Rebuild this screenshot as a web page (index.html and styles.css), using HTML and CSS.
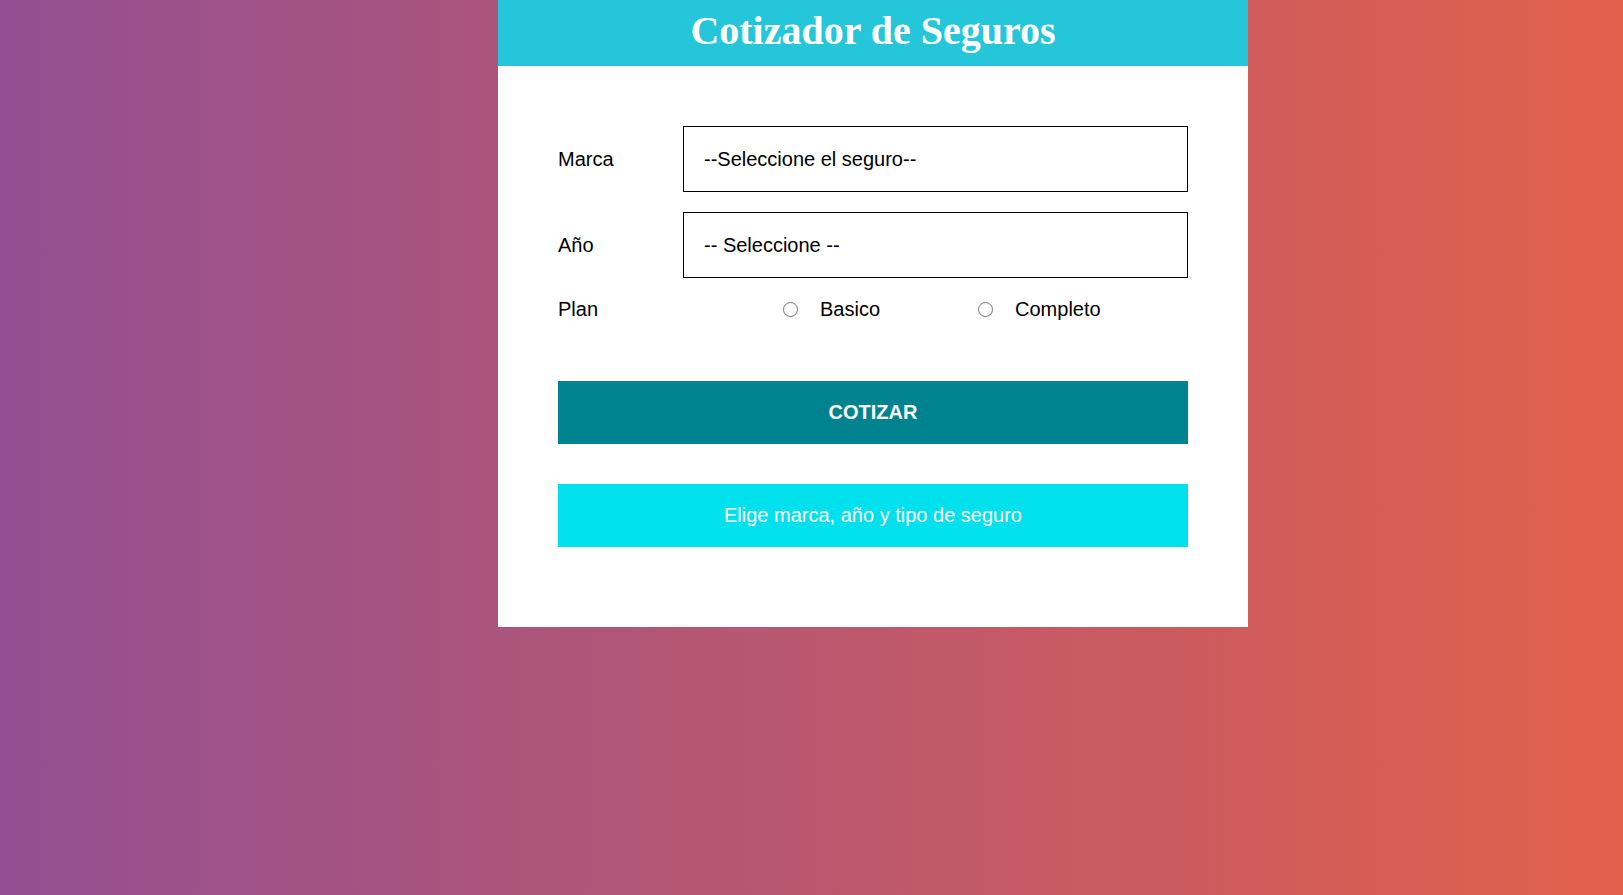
FILE: index.html
```html
<!DOCTYPE html>
<html lang="es">
<head>
<meta charset="utf-8">
<title>Cotizador de Seguros</title>
<link rel="stylesheet" href="styles.css">
</head>
<body>
<div class="page">
  <div class="contenedor">
    <header class="header">
      <h1 class="titulo">Cotizador de Seguros</h1>
    </header>
    <form class="formulario">
      <div class="campo">
        <label class="etiqueta" for="marca">Marca</label>
        <select class="selector" id="marca">
          <option>--Seleccione el seguro--</option>
        </select>
      </div>
      <div class="campo">
        <label class="etiqueta" for="year">Año</label>
        <select class="selector" id="year">
          <option>-- Seleccione --</option>
        </select>
      </div>
      <div class="campo campo-plan">
        <span class="etiqueta">Plan</span>
        <div class="opciones">
          <label class="opcion opcion-basico"><input class="radio" type="radio" name="plan" value="basico"><span class="opcion-texto">Basico</span></label>
          <label class="opcion opcion-completo"><input class="radio" type="radio" name="plan" value="completo"><span class="opcion-texto">Completo</span></label>
        </div>
      </div>
      <button class="boton" type="button">COTIZAR</button>
      <div class="resultado">Elige marca, año y tipo de seguro</div>
    </form>
  </div>
</div>
</body>
</html>
```

FILE: styles.css
```css
html, body {
  margin: 0;
  padding: 0;
  height: 100%;
}

body {
  background: linear-gradient(to right, #934f92, #e2604b);
  font-family: "Liberation Sans", Arial, sans-serif;
  color: #000;
}

.page {
  display: flex;
  justify-content: center;
  padding-left: 123px;
}

.contenedor {
  width: 750px;
  background: #fff;
}

.header {
  background: #26c6da;
  height: 66px;
}

.titulo {
  margin: 0;
  padding-top: 9px;
  line-height: 44px;
  text-align: center;
  font-family: "Liberation Serif", "Times New Roman", serif;
  font-weight: bold;
  font-size: 40px;
  color: #fff;
}

.formulario {
  padding: 60px 60px 80px;
}

.campo {
  display: flex;
  align-items: center;
  margin-bottom: 20px;
}

.etiqueta {
  flex: 0 0 125px;
  font-size: 20px;
}

.selector {
  flex: 1;
  -webkit-appearance: none;
  appearance: none;
  height: 66px;
  box-sizing: border-box;
  padding: 0 20px;
  border: 1px solid #000;
  border-radius: 0;
  background: #fff;
  font-family: "Liberation Sans", Arial, sans-serif;
  font-size: 20px;
  color: #000;
}

.campo-plan {
  line-height: 23px;
}

.opciones {
  display: flex;
  align-items: center;
  padding-left: 100px;
}

.opcion {
  display: flex;
  align-items: center;
  font-size: 20px;
}

.opcion-completo {
  margin-left: 98px;
}

.radio {
  margin: 0 22px 0 0;
  width: 15px;
  height: 15px;
}

.boton {
  display: block;
  width: 100%;
  height: 63px;
  margin-top: 60px;
  border: none;
  background: #00838f;
  color: #fff;
  font-family: "Liberation Sans", Arial, sans-serif;
  font-weight: bold;
  font-size: 20px;
  cursor: pointer;
}

.resultado {
  margin-top: 40px;
  height: 63px;
  line-height: 63px;
  background: #00e1ed;
  color: #fff;
  text-align: center;
  font-size: 20px;
}
```
